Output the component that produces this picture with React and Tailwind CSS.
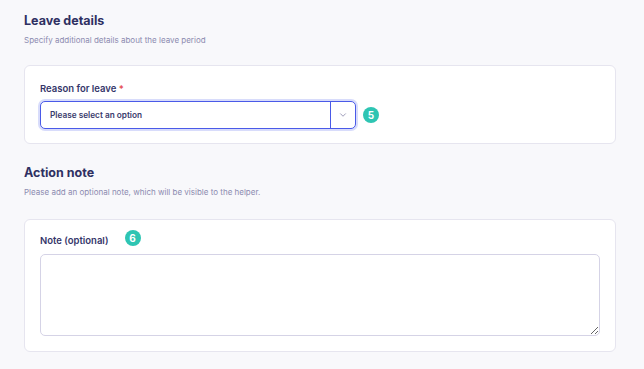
import React from 'react';
import { ChevronDown } from 'lucide-react';

const Badge = ({ n }) => (
  <span className="flex h-4 w-4 shrink-0 items-center justify-center rounded-full bg-[#2ec5b3] text-[10px] font-bold leading-none text-white">
    {n}
  </span>
);

const SectionHead = ({ title, sub }) => (
  <div>
    <h2 className="text-[12.5px] font-bold leading-[18px] text-[#2f3062]">{title}</h2>
    <p className="mt-[4px] text-[8px] leading-[12px] text-[#8c8bb0]">{sub}</p>
  </div>
);

export default function App() {
  return (
    <div className="min-h-[369px] w-full bg-[#f8f8fb] px-6 pt-[12px] font-['Inter',sans-serif]">
      <SectionHead title="Leave details" sub="Specify additional details about the leave period" />

      <div className="mt-[19px] mr-[4px] rounded-[6px] border border-[#e6e5ef] bg-white px-[15px] pb-[14px] pt-[17px]">
        <label className="block text-[9.5px] font-semibold leading-[12px] text-[#35366a]">
          Reason for leave <span className="text-[#e5484d]">*</span>
        </label>
        <div className="mt-[6px] flex items-center gap-[7px]">
          <div className="flex h-[28px] w-[316px] items-stretch rounded-[5px] border border-[#4a5ae8] bg-white shadow-[0_0_0_2px_#d8dcfb]">
            <div className="flex flex-1 items-center pl-[9px] text-[8.25px] font-semibold text-[#3a3b6c]">
              Please select an option
            </div>
            <div className="flex w-[25px] items-center justify-center border-l border-[#4a5ae8]">
              <ChevronDown className="h-[10px] w-[10px] text-[#7a79a0]" strokeWidth={1.75} />
            </div>
          </div>
          <Badge n="5" />
        </div>
      </div>

      <div className="mt-[20px]">
        <SectionHead title="Action note" sub="Please add an optional note, which will be visible to the helper." />
      </div>

      <div className="mt-[21px] mr-[4px] rounded-[6px] border border-[#e6e5ef] bg-white px-[15px] pb-[15px] pt-[10px]">
        <div className="flex items-start gap-[16px]">
          <label className="block pt-[5px] text-[9.5px] font-semibold leading-[12px] text-[#35366a]">Note (optional)</label>
          <Badge n="6" />
        </div>
        <textarea className="mt-[7px] block h-[82px] w-full rounded-[5px] border border-[#d5d3e6] bg-white" />
      </div>
    </div>
  );
}
